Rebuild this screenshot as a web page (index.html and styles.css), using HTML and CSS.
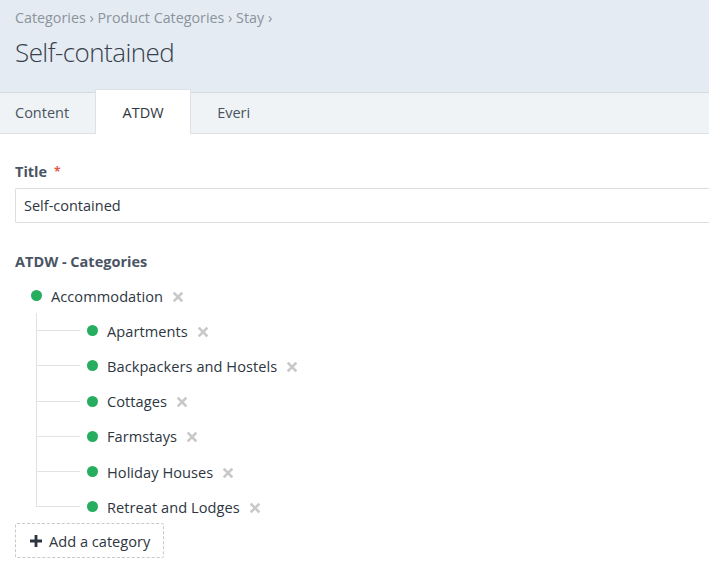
FILE: index.html
```html
<!DOCTYPE html>
<html>
<head>
<meta charset="utf-8">
<link rel="stylesheet" href="styles.css">
</head>
<body>
<header class="header">
  <nav class="crumbs">Categories › Product Categories › Stay ›</nav>
  <h1 class="page-title">Self-contained</h1>
</header>
<div class="tabs">
  <div class="tab">Content</div>
  <div class="tab active">ATDW</div>
  <div class="tab">Everi</div>
</div>
<main class="content">
  <div class="field">
    <label class="label">Title <span class="req">*</span></label>
    <div class="input">Self-contained</div>
  </div>
  <div class="field cats">
    <div class="label">ATDW - Categories</div>
    <div class="tree">
      <div class="node root"><span class="dot"></span><span class="name">Accommodation</span><svg class="x" width="10" height="10" viewBox="0 0 10 10"><path d="M1.5 1.5l7 7M8.5 1.5l-7 7" stroke="#c9c9c9" stroke-width="2.6" stroke-linecap="square"/></svg></div>
      <div class="children">
        <div class="node child"><span class="branch"></span><span class="dot"></span><span class="name">Apartments</span><svg class="x" width="10" height="10" viewBox="0 0 10 10"><path d="M1.5 1.5l7 7M8.5 1.5l-7 7" stroke="#c9c9c9" stroke-width="2.6" stroke-linecap="square"/></svg></div>
        <div class="node child"><span class="branch"></span><span class="dot"></span><span class="name">Backpackers and Hostels</span><svg class="x" width="10" height="10" viewBox="0 0 10 10"><path d="M1.5 1.5l7 7M8.5 1.5l-7 7" stroke="#c9c9c9" stroke-width="2.6" stroke-linecap="square"/></svg></div>
        <div class="node child"><span class="branch"></span><span class="dot"></span><span class="name">Cottages</span><svg class="x" width="10" height="10" viewBox="0 0 10 10"><path d="M1.5 1.5l7 7M8.5 1.5l-7 7" stroke="#c9c9c9" stroke-width="2.6" stroke-linecap="square"/></svg></div>
        <div class="node child"><span class="branch"></span><span class="dot"></span><span class="name">Farmstays</span><svg class="x" width="10" height="10" viewBox="0 0 10 10"><path d="M1.5 1.5l7 7M8.5 1.5l-7 7" stroke="#c9c9c9" stroke-width="2.6" stroke-linecap="square"/></svg></div>
        <div class="node child"><span class="branch"></span><span class="dot"></span><span class="name">Holiday Houses</span><svg class="x" width="10" height="10" viewBox="0 0 10 10"><path d="M1.5 1.5l7 7M8.5 1.5l-7 7" stroke="#c9c9c9" stroke-width="2.6" stroke-linecap="square"/></svg></div>
        <div class="node child last"><span class="branch"></span><span class="dot"></span><span class="name">Retreat and Lodges</span><svg class="x" width="10" height="10" viewBox="0 0 10 10"><path d="M1.5 1.5l7 7M8.5 1.5l-7 7" stroke="#c9c9c9" stroke-width="2.6" stroke-linecap="square"/></svg></div>
      </div>
    </div>
    <button class="add"><svg width="12" height="12" viewBox="0 0 12 12"><path d="M4.6 0h2.8v4.6H12v2.8H7.4V12H4.6V7.4H0V4.6h4.6z" fill="#2b3440"/></svg>Add a category</button>
  </div>
</main>
</body>
</html>
```
FILE: styles.css
```css
* { box-sizing: border-box; }
html, body { margin: 0; padding: 0; }
body {
  font-family: "Open Sans", "Noto Sans", sans-serif;
  color: #2e3642;
  background: #fff;
  width: 709px;
  overflow: hidden;
}
.header {
  background: #e4ebf2;
  padding: 8px 15px 0;
  height: 93px;
  border-bottom: 1px solid #d3dae1;
}
.crumbs {
  font-size: 14.3px;
  color: #8c939c;
  line-height: 20px;
  letter-spacing: 0;
}
.page-title {
  margin: 8px 0 0;
  font-weight: 300;
  font-size: 26px;
  line-height: 32px;
  color: #37404c;
  letter-spacing: -0.55px;
}
.tabs {
  display: flex;
  background: #eff3f6;
  height: 41px;
  border-bottom: 1px solid #dde2e6;
}
.tab {
  font-size: 14.5px;
  color: #4a5360;
  line-height: 40px;
  padding: 0 15px;
}
.tab:first-child { padding-right: 26px; }
.tab.active {
  background: #fff;
  border: 1px solid #dde2e6;
  border-bottom: none;
  width: 96px;
  text-align: center;
  margin-top: -4px;
  height: 45px;
  line-height: 46px;
  color: #2e3642;
  padding: 0;
}
.tab.active + .tab { padding-left: 26px; }
.content { padding: 28px 0 0 15px; }
.label {
  display: block;
  font-weight: 700;
  font-size: 14.5px;
  color: #4a5464;
  line-height: 20px;
  margin-bottom: 6px;
}
.req { color: #e05a4a; font-size: 12px; margin-left: 3px; vertical-align: 1px; }
.input {
  height: 35px;
  border: 1px solid #dcdfe2;
  border-right: none;
  border-radius: 2px 0 0 2px;
  padding: 0 8px;
  font-size: 14.5px;
  line-height: 33px;
  color: #2e3642;
}
.cats { margin-top: 29px; }
.cats .label { margin-bottom: 6px; }
.tree { padding-left: 16px; }
.node {
  display: flex;
  align-items: center;
  height: 35.2px;
  font-size: 14.6px;
  color: #2e3642;
}
.dot {
  width: 11px;
  height: 11px;
  border-radius: 50%;
  background: #26ad5f;
  margin-right: 9px;
  flex: none;
}
.name { letter-spacing: 0.05px; }
.x {
  margin-left: 10px;
  margin-top: 2px;
  flex: none;
}
.children {
  margin-left: 5px;
  border-left: 1px solid #e2e2e2;
  height: 194px;
}
.branch {
  width: 43px;
  height: 1px;
  background: #e2e2e2;
  margin-right: 7px;
  flex: none;
}
.add {
  margin-top: 16px;
  display: flex;
  align-items: center;
  gap: 7px;
  height: 35px;
  padding: 0 13px 0 14px;
  background: #fff;
  border: 1px dashed #c8c8c8;
  border-radius: 2px;
  font-family: inherit;
  font-size: 14.6px;
  color: #2e3642;
}
```
